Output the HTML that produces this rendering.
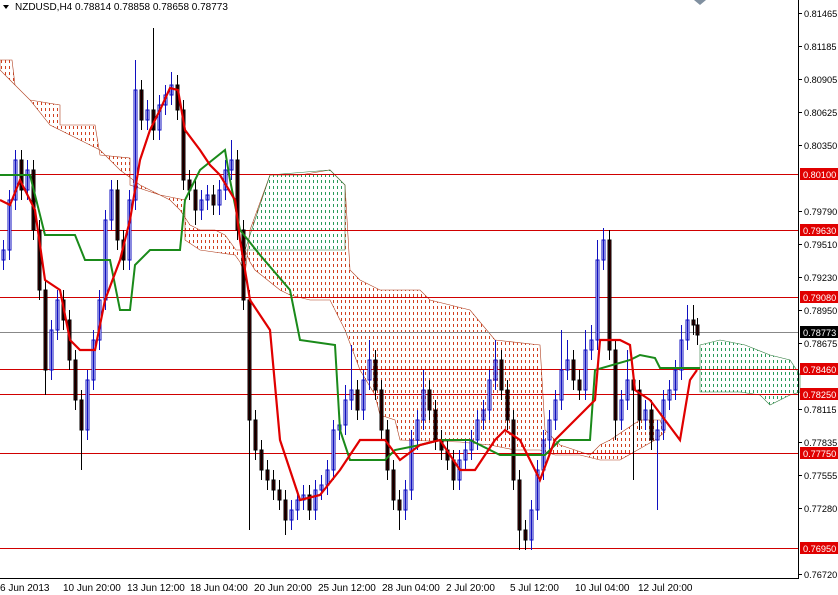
<!DOCTYPE html><html><head><meta charset="utf-8"><style>
body{margin:0;width:838px;height:595px;background:#fff;overflow:hidden;font-family:"Liberation Sans",sans-serif}
svg{position:absolute;left:0;top:0}
</style></head><body>
<svg width="838" height="595" xmlns="http://www.w3.org/2000/svg" font-family="Liberation Sans, sans-serif" font-size="10">
<defs>
<pattern id="pb" x="0" y="0" width="4" height="6" patternUnits="userSpaceOnUse"><rect x="1" y="0" width="1" height="3" fill="#d04020"/></pattern>
<pattern id="pg" x="0" y="0" width="4" height="6" patternUnits="userSpaceOnUse"><rect x="1" y="0" width="1" height="3" fill="#2a9a5a"/></pattern>
</defs>
<polygon points="0,60 12,60 15,85 30,100 60,105 60,125 95,125 100,155 130,158 130,185 160,195 185,200 185,240 200,250 235,255 240,262 245,275 250,230 270,175 300,175 330,170 345,185 350,270 360,280 380,290 420,290 430,300 470,310 495,340 540,345 545,430 560,445 590,455 600,445 610,440 640,420 660,420 665,432 655,440 620,460 600,460 580,455 555,455 540,450 515,450 490,445 460,442 400,440 395,420 380,415 375,395 360,370 345,330 330,300 310,300 290,295 280,290 255,270 250,262 245,250 236,250 225,235 215,230 200,230 190,225 180,210 170,200 150,190 140,185 120,170 100,150 80,140 50,125 30,100 10,80 0,70" fill="url(#pb)" stroke="#b04020" stroke-width="0.6"/>
<polygon points="245,250 270,175 330,170 345,185 345,250 300,250 260,250" fill="url(#pg)" stroke="#2a7a3a" stroke-width="0.6"/>
<polygon points="700,345 720,340 745,345 770,355 790,360 800,375 800,392 790,395 770,405 760,395 740,392 700,392" fill="url(#pg)" stroke="#2a7a3a" stroke-width="0.6"/>
<g stroke="#d00000" stroke-width="1">
<line x1="0" y1="174.5" x2="798" y2="174.5"/><line x1="0" y1="230.5" x2="798" y2="230.5"/><line x1="0" y1="297.5" x2="798" y2="297.5"/><line x1="0" y1="369.5" x2="798" y2="369.5"/><line x1="0" y1="394.5" x2="798" y2="394.5"/><line x1="0" y1="453.5" x2="798" y2="453.5"/><line x1="0" y1="548.5" x2="798" y2="548.5"/>
</g>
<line x1="0" y1="332.5" x2="798" y2="332.5" stroke="#888" stroke-width="1"/>
<path fill="#fff" stroke="#1010c0" stroke-width="1" d="M3.5,240V270M2,250h3V260h-3ZM9.5,190V260M8,200h3V250h-3ZM15.5,150V210M14,160h3V200h-3ZM27.5,160V200M26,170h3V190h-3ZM51.5,320V380M50,330h3V370h-3ZM57.5,290V340M56,300h3V330h-3ZM87.5,370V440M86,380h3V430h-3ZM93.5,330V390M92,340h3V380h-3ZM99.5,290V350M98,300h3V340h-3ZM105.5,210V310M104,220h3V300h-3ZM111.5,180V230M110,190h3V220h-3ZM129.5,190V270M128,200h3V260h-3ZM135.5,60V210M134,90h3V200h-3ZM147.5,100V130M146,110h3V120h-3ZM159.5,95V140M158,105h3V130h-3ZM165.5,85V115M164,95h3V105h-3ZM171.5,72V105M170,85h3V95h-3ZM201.5,190V220M200,200h3V210h-3ZM207.5,185V210M206,195h3V200h-3ZM219.5,180V215M218,190h3V205h-3ZM225.5,160V200M224,170h3V190h-3ZM231.5,140V180M230,160h3V170h-3ZM291.5,500V530M290,510h3V520h-3ZM297.5,490V520M296,500h3V510h-3ZM303.5,485V510M302,495h3V500h-3ZM315.5,480V520M314,490h3V510h-3ZM321.5,475V500M320,485h3V490h-3ZM327.5,460V495M326,470h3V485h-3ZM333.5,420V480M332,430h3V470h-3ZM339.5,415V440M338,425h3V430h-3ZM345.5,385V435M344,400h3V425h-3ZM351.5,345V410M350,390h3V400h-3ZM363.5,370V420M362,380h3V410h-3ZM369.5,340V390M368,360h3V380h-3ZM405.5,480V520M404,490h3V510h-3ZM411.5,430V500M410,440h3V490h-3ZM417.5,410V450M416,420h3V440h-3ZM423.5,370V430M422,390h3V420h-3ZM459.5,450V490M458,460h3V480h-3ZM465.5,440V470M464,450h3V460h-3ZM471.5,430V460M470,440h3V450h-3ZM477.5,410V450M476,420h3V440h-3ZM483.5,400V430M482,410h3V420h-3ZM489.5,370V420M488,380h3V410h-3ZM495.5,340V390M494,360h3V380h-3ZM531.5,500V550M530,510h3V540h-3ZM537.5,460V520M536,470h3V510h-3ZM543.5,430V480M542,440h3V470h-3ZM549.5,410V450M548,420h3V440h-3ZM555.5,390V430M554,400h3V420h-3ZM561.5,330V410M560,370h3V400h-3ZM567.5,340V380M566,360h3V370h-3ZM585.5,330V400M584,350h3V390h-3ZM591.5,325V360M590,340h3V350h-3ZM597.5,240V350M596,260h3V340h-3ZM603.5,228V270M602,240h3V260h-3ZM621.5,390V430M620,400h3V420h-3ZM627.5,350V410M626,380h3V400h-3ZM645.5,400V430M644,410h3V420h-3ZM657.5,420V510M656,430h3V440h-3ZM663.5,390V440M662,400h3V430h-3ZM669.5,380V410M668,390h3V400h-3ZM675.5,360V400M674,370h3V390h-3ZM681.5,325V380M680,340h3V370h-3ZM687.5,305V350M686,320h3V340h-3Z"/>
<path fill="#5a0000" stroke="#000" stroke-width="1" d="M21.5,150V200M20,160h3V190h-3ZM33.5,160V240M32,170h3V230h-3ZM39.5,220V300M38,230h3V290h-3ZM45.5,280V395M44,290h3V370h-3ZM63.5,290V330M62,300h3V320h-3ZM69.5,310V370M68,320h3V360h-3ZM75.5,350V410M74,360h3V400h-3ZM81.5,390V470M80,400h3V430h-3ZM117.5,180V250M116,190h3V240h-3ZM123.5,230V270M122,240h3V260h-3ZM141.5,80V130M140,90h3V120h-3ZM153.5,28V140M152,110h3V130h-3ZM177.5,75V120M176,85h3V110h-3ZM183.5,100V190M182,110h3V180h-3ZM189.5,170V200M188,180h3V190h-3ZM195.5,180V225M194,190h3V210h-3ZM213.5,185V215M212,195h3V205h-3ZM237.5,150V240M236,160h3V230h-3ZM243.5,220V310M242,230h3V300h-3ZM249.5,290V530M248,300h3V420h-3ZM255.5,410V460M254,420h3V450h-3ZM261.5,440V480M260,450h3V470h-3ZM267.5,460V490M266,470h3V480h-3ZM273.5,470V500M272,480h3V490h-3ZM279.5,480V510M278,490h3V500h-3ZM285.5,490V535M284,500h3V520h-3ZM309.5,485V520M308,495h3V510h-3ZM357.5,380V420M356,390h3V410h-3ZM375.5,350V400M374,360h3V390h-3ZM381.5,380V440M380,390h3V430h-3ZM387.5,420V480M386,430h3V470h-3ZM393.5,460V510M392,470h3V500h-3ZM399.5,490V530M398,500h3V510h-3ZM429.5,380V420M428,390h3V410h-3ZM435.5,400V450M434,410h3V440h-3ZM441.5,430V460M440,440h3V450h-3ZM447.5,440V470M446,450h3V460h-3ZM453.5,450V490M452,460h3V480h-3ZM501.5,350V400M500,360h3V390h-3ZM507.5,380V430M506,390h3V420h-3ZM513.5,410V490M512,420h3V480h-3ZM519.5,470V550M518,480h3V530h-3ZM525.5,520V550M524,530h3V540h-3ZM573.5,350V390M572,360h3V380h-3ZM579.5,370V400M578,380h3V390h-3ZM609.5,230V360M608,240h3V350h-3ZM615.5,340V440M614,350h3V420h-3ZM633.5,370V480M632,380h3V390h-3ZM639.5,380V430M638,390h3V420h-3ZM651.5,400V450M650,410h3V440h-3ZM693.5,305V335M692,320h3V325h-3ZM697.5,318V345M696,325h3V335h-3Z"/>
<polyline fill="none" stroke="#1a8a1a" stroke-width="2" points="0,175 30,175 45,235 75,235 85,260 110,260 120,310 130,310 135,265 150,250 180,250 185,200 200,170 225,150 230,180 240,230 260,255 290,290 300,340 335,345 340,430 350,460 385,460 395,450 420,445 440,440 470,440 500,455 545,455 560,440 590,440 595,370 630,360 640,355 655,358 660,368 700,368"/>
<polyline fill="none" stroke="#e00000" stroke-width="2.2" points="0,200 10,205 20,180 35,210 45,280 60,290 70,340 80,350 95,350 105,300 120,260 130,220 140,160 150,130 160,110 170,88 178,90 185,130 200,150 210,165 220,175 235,200 240,240 250,300 270,330 280,440 300,500 320,495 340,470 360,440 385,440 400,460 420,445 440,440 460,470 475,470 495,440 505,430 520,440 540,480 555,440 575,420 595,400 600,340 620,340 630,345 635,390 650,400 665,420 680,440 690,380 697,370"/>
<line x1="798.5" y1="0" x2="798.5" y2="578" stroke="#000"/>
<line x1="0" y1="578.5" x2="799" y2="578.5" stroke="#000"/>
<g stroke="#000"><line x1="798" y1="13.5" x2="802" y2="13.5"/><line x1="798" y1="46.5" x2="802" y2="46.5"/><line x1="798" y1="79.5" x2="802" y2="79.5"/><line x1="798" y1="112.5" x2="802" y2="112.5"/><line x1="798" y1="145.5" x2="802" y2="145.5"/><line x1="798" y1="211.5" x2="802" y2="211.5"/><line x1="798" y1="244.5" x2="802" y2="244.5"/><line x1="798" y1="277.5" x2="802" y2="277.5"/><line x1="798" y1="310.5" x2="802" y2="310.5"/><line x1="798" y1="343.5" x2="802" y2="343.5"/><line x1="798" y1="409.5" x2="802" y2="409.5"/><line x1="798" y1="442.5" x2="802" y2="442.5"/><line x1="798" y1="475.5" x2="802" y2="475.5"/><line x1="798" y1="508.5" x2="802" y2="508.5"/><line x1="798" y1="574.5" x2="802" y2="574.5"/></g>
<g fill="#000" font-size="9.2">
<text x="804" y="17">0.81465</text><text x="804" y="50">0.81185</text><text x="804" y="83">0.80905</text><text x="804" y="116">0.80625</text><text x="804" y="149">0.80350</text><text x="804" y="215">0.79790</text><text x="804" y="248">0.79510</text><text x="804" y="281">0.79230</text><text x="804" y="314">0.78950</text><text x="804" y="347">0.78675</text><text x="804" y="413">0.78115</text><text x="804" y="446">0.77835</text><text x="804" y="479">0.77555</text><text x="804" y="512">0.77280</text><text x="804" y="578">0.76720</text>
</g>
<g font-size="9.2">
<rect x="800" y="168" width="38" height="12" fill="#e00000"/><text x="803" y="178" fill="#fff">0.80100</text>
<rect x="800" y="224" width="38" height="12" fill="#e00000"/><text x="803" y="234" fill="#fff">0.79630</text>
<rect x="800" y="291" width="38" height="12" fill="#e00000"/><text x="803" y="301" fill="#fff">0.79080</text>
<rect x="800" y="326" width="38" height="12" fill="#000"/><text x="803" y="336" fill="#fff">0.78773</text>
<rect x="800" y="363" width="38" height="12" fill="#e00000"/><text x="803" y="373" fill="#fff">0.78460</text>
<rect x="800" y="388" width="38" height="12" fill="#e00000"/><text x="803" y="398" fill="#fff">0.78250</text>
<rect x="800" y="447" width="38" height="12" fill="#e00000"/><text x="803" y="457" fill="#fff">0.77750</text>
<rect x="800" y="542" width="38" height="12" fill="#e00000"/><text x="803" y="552" fill="#fff">0.76950</text>
</g>
<g font-size="10" fill="#000">
<text x="0" y="591">6 Jun 2013</text><text x="63" y="591">10 Jun 20:00</text><text x="127" y="591">13 Jun 12:00</text><text x="190" y="591">18 Jun 04:00</text><text x="254" y="591">20 Jun 20:00</text><text x="318" y="591">25 Jun 12:00</text><text x="382" y="591">28 Jun 04:00</text><text x="446" y="591">2 Jul 20:00</text><text x="510" y="591">5 Jul 12:00</text><text x="575" y="591">10 Jul 04:00</text><text x="638" y="591">12 Jul 20:00</text>
</g>
<polygon points="3,5 9,5 6,9" fill="#000"/>
<text x="15" y="10" font-size="10" fill="#000">NZDUSD,H4  0.78814 0.78858 0.78658 0.78773</text>
<polygon points="694,0 706,0 700,5" fill="#8090a0"/>
</svg>
</body></html>
